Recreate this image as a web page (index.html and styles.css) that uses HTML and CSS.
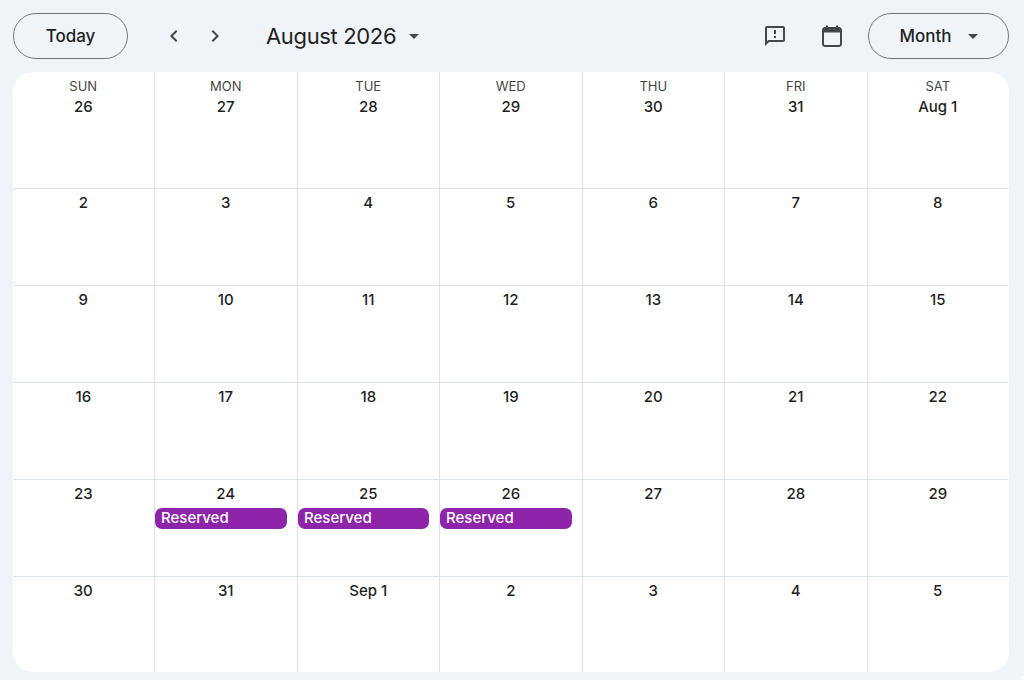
FILE: index.html
```html
<!DOCTYPE html>
<html lang="en">
<head>
<meta charset="utf-8">
<title>Calendar</title>
<link rel="stylesheet" href="styles.css">
</head>
<body>
<div class="app">
  <header class="toolbar">
    <button class="pill today">Today</button>
    <div class="nav">
      <button class="icon-btn"><svg width="24" height="24" viewBox="0 0 24 24"><path d="M15.41 7.41 14 6l-6 6 6 6 1.41-1.41L10.83 12z" fill="#444746"/></svg></button>
      <button class="icon-btn"><svg width="24" height="24" viewBox="0 0 24 24"><path d="M8.59 16.59 10 18l6-6-6-6-1.41 1.41L13.17 12z" fill="#444746"/></svg></button>
    </div>
    <div class="title">August 2026<span class="caret title-caret"></span></div>
    <div class="spacer"></div>
    <button class="icon-btn feedback"><svg width="24" height="24" viewBox="0 0 24 24"><path d="M20 2H4c-1.1 0-2 .9-2 2v18l4-4h14c1.1 0 2-.9 2-2V4c0-1.1-.9-2-2-2zm0 14H5.17L4 17.17V4h16v12zM11 12h2v2h-2zm0-6h2v4h-2z" fill="#444746"/></svg></button>
    <button class="icon-btn cal"><svg width="24" height="24" viewBox="0 0 24 24"><path d="M6 1.5h2V3h8V1.5h2V3h1c1.66 0 3 1.34 3 3v14c0 1.66-1.34 3-3 3H5c-1.66 0-3-1.34-3-3V6c0-1.66 1.34-3 3-3h1zM4 8.500V20c0 .55.45 1 1 1h14c.55 0 1-.45 1-1V8.500z" fill="#444746" fill-rule="evenodd"/></svg></button>
    <button class="pill month">Month<span class="caret month-caret"></span></button>
  </header>
  <main class="grid">
    <div class="cell first"><div class="dow">SUN</div><div class="num">26</div></div>
    <div class="cell first"><div class="dow">MON</div><div class="num">27</div></div>
    <div class="cell first"><div class="dow">TUE</div><div class="num">28</div></div>
    <div class="cell first"><div class="dow">WED</div><div class="num">29</div></div>
    <div class="cell first"><div class="dow">THU</div><div class="num">30</div></div>
    <div class="cell first"><div class="dow">FRI</div><div class="num">31</div></div>
    <div class="cell first"><div class="dow">SAT</div><div class="num">Aug 1</div></div>
    <div class="cell"><div class="num">2</div></div>
    <div class="cell"><div class="num">3</div></div>
    <div class="cell"><div class="num">4</div></div>
    <div class="cell"><div class="num">5</div></div>
    <div class="cell"><div class="num">6</div></div>
    <div class="cell"><div class="num">7</div></div>
    <div class="cell"><div class="num">8</div></div>
    <div class="cell"><div class="num">9</div></div>
    <div class="cell"><div class="num">10</div></div>
    <div class="cell"><div class="num">11</div></div>
    <div class="cell"><div class="num">12</div></div>
    <div class="cell"><div class="num">13</div></div>
    <div class="cell"><div class="num">14</div></div>
    <div class="cell"><div class="num">15</div></div>
    <div class="cell"><div class="num">16</div></div>
    <div class="cell"><div class="num">17</div></div>
    <div class="cell"><div class="num">18</div></div>
    <div class="cell"><div class="num">19</div></div>
    <div class="cell"><div class="num">20</div></div>
    <div class="cell"><div class="num">21</div></div>
    <div class="cell"><div class="num">22</div></div>
    <div class="cell"><div class="num">23</div></div>
    <div class="cell"><div class="num">24</div><div class="event">Reserved</div></div>
    <div class="cell"><div class="num">25</div><div class="event">Reserved</div></div>
    <div class="cell"><div class="num">26</div><div class="event">Reserved</div></div>
    <div class="cell"><div class="num">27</div></div>
    <div class="cell"><div class="num">28</div></div>
    <div class="cell"><div class="num">29</div></div>
    <div class="cell"><div class="num">30</div></div>
    <div class="cell"><div class="num">31</div></div>
    <div class="cell"><div class="num">Sep 1</div></div>
    <div class="cell"><div class="num">2</div></div>
    <div class="cell"><div class="num">3</div></div>
    <div class="cell"><div class="num">4</div></div>
    <div class="cell"><div class="num">5</div></div>
  </main>
</div>
</body>
</html>
```
FILE: styles.css
```css
* { box-sizing: border-box; }
html, body { margin: 0; height: 100%; }
body {
  background: #f0f4f9;
  font-family: "Inter", "Roboto", sans-serif;
  color: #1f1f1f;
  overflow: hidden;
}
body::after {
  content: "";
  position: fixed;
  right: 0;
  bottom: 0;
  width: 4px;
  height: 4px;
  background: #fff;
  border-top-left-radius: 100%;
}
.app { padding: 0 15px 8px 13px; height: 680px; display: flex; flex-direction: column; }
.toolbar { height: 72px; display: flex; align-items: center; flex: none; }
button { font-family: inherit; background: none; border: none; padding: 0; color: inherit; cursor: pointer; }
.pill {
  height: 46px;
  border: 1px solid #747775;
  border-radius: 23px;
  font-size: 17px;
  font-weight: 500;
  display: flex;
  align-items: center;
  justify-content: center;
}
.today { width: 115px; }
.month { width: 141px; }
.nav { display: flex; gap: 17px; margin-left: 34px; }
.icon-btn { width: 24px; height: 24px; display: flex; }
.title { margin-left: 39px; font-size: 22px; letter-spacing: -0.35px; font-weight: 400; display: flex; align-items: center; }
.caret { width: 0; height: 0; border-left: 5px solid transparent; border-right: 5px solid transparent; border-top: 5px solid #444746; }
.title-caret { margin-left: 13px; }
.month-caret { margin-left: 16px; }
.spacer { flex: 1; }
.feedback { margin-right: 33px; }
.cal { margin-right: 24px; }
.grid {
  flex: 1;
  background: #fff;
  border-radius: 20px;
  overflow: hidden;
  display: grid;
  grid-template-columns: 142px 143px 142px 143px 142px 143px 1fr;
  grid-template-rows: 117px 97px 97px 97px 97px 1fr;
}
.cell {
  border-right: 1px solid #dde3ea;
  border-bottom: 1px solid #dde3ea;
  display: flex;
  flex-direction: column;
  align-items: center;
  padding: 4px 0.5px 0 0;
  min-width: 0;
}
.cell:nth-child(7n) { border-right-color: transparent; }
.cell:nth-last-child(-n+7) { border-bottom: none; }
.first { padding-top: 6px; }
.dow { font-size: 13px; line-height: 17px; margin-bottom: 2px; color: #444746; font-weight: 400; }
.num { font-size: 15px; line-height: 20px; font-weight: 500; color: #1f1f1f; }
.event {
  align-self: stretch;
  margin: 4px 9.5px 0 0;
  height: 21px;
  border-radius: 7px;
  background: #8e24aa;
  color: #fff;
  font-size: 15px;
  font-weight: 500;
  line-height: 19px;
  padding-left: 6px;
}
```
